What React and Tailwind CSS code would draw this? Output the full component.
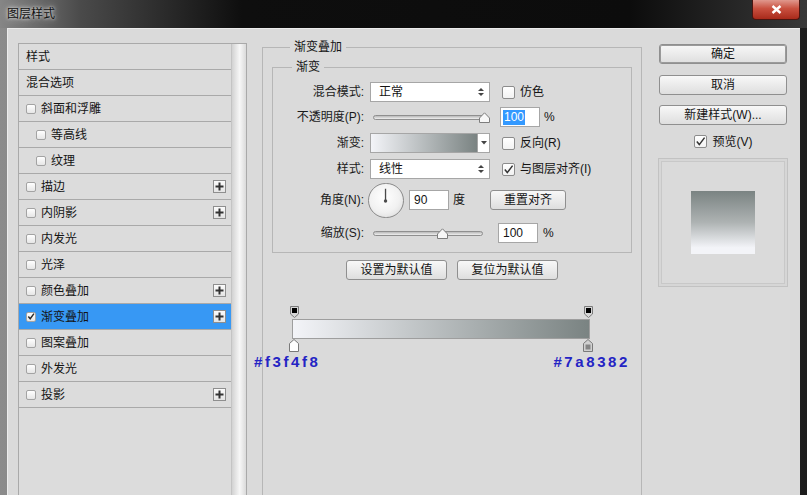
import React from "react";

const FONT = "font-['Liberation_Sans','Noto_Sans_CJK_SC',sans-serif]";

function SmallBox({ checked }) {
  return (
    <span className="w-[10px] h-[10px] shrink-0 rounded-[2px] border border-[#a3a3a3] bg-[linear-gradient(180deg,#ffffff,#e6e6e6)] flex items-center justify-center">
      {checked && (
        <svg width="9" height="9" viewBox="0 0 9 9">
          <path d="M1.5 4.5 L3.6 7 L7.8 1.2" stroke="#2a2a2a" strokeWidth="1.6" fill="none" />
        </svg>
      )}
    </span>
  );
}

function Plus() {
  return (
    <span className="ml-auto w-[13px] h-[13px] border border-[#8e8e8e] bg-[linear-gradient(180deg,#fbfbfb,#e4e4e4)] flex items-center justify-center">
      <svg width="9" height="9" viewBox="0 0 9 9">
        <rect x="3.5" y="0.5" width="2" height="8" fill="#333" />
        <rect x="0.5" y="3.5" width="8" height="2" fill="#333" />
      </svg>
    </span>
  );
}

function Check({ checked }) {
  return (
    <span className="w-[13px] h-[13px] shrink-0 rounded-[2px] border border-[#8c8c8c] bg-[linear-gradient(180deg,#ffffff,#f2f2f2)] flex items-center justify-center">
      {checked && (
        <svg width="11" height="11" viewBox="0 0 11 11">
          <path d="M1.8 5.6 L4.3 8.6 L9.6 1.6" stroke="#333" strokeWidth="1.5" fill="none" />
        </svg>
      )}
    </span>
  );
}

function Select({ value }) {
  return (
    <div className="w-[120px] h-[20px] bg-white border border-[#a6a6a6] flex items-center pl-[8px] pr-[5px]">
      <span>{value}</span>
      <svg className="ml-auto" width="6" height="10" viewBox="0 0 6 10">
        <path d="M0 4 L3 1 L6 4 Z" fill="#444" />
        <path d="M0 6 L3 9 L6 6 Z" fill="#444" />
      </svg>
    </div>
  );
}

function Thumb() {
  return (
    <svg width="11" height="11" viewBox="0 0 11 11">
      <path d="M0.5 10.5 L0.5 6 L5.5 0.8 L10.5 6 L10.5 10.5 Z" fill="#f7f7f7" stroke="#7d7d7d" />
    </svg>
  );
}

function Btn({ children, className = "" }) {
  return (
    <div
      className={`h-[20px] rounded-[3px] border border-[#8f8f8f] bg-[linear-gradient(180deg,#f8f8f8,#dedede)] flex items-center justify-center text-[#151515] ${className}`}
    >
      {children}
    </div>
  );
}

function Row({ label, children, className = "" }) {
  return (
    <div className={`flex items-center ${className}`}>
      <span className="w-[92px] text-right pr-[1px] text-[#1a1a1a]">{label}</span>
      <div className="ml-[5px] flex items-center">{children}</div>
    </div>
  );
}

const items = [
  { label: "样式" },
  { label: "混合选项" },
  { label: "斜面和浮雕", box: false },
  { label: "等高线", box: false, indent: true },
  { label: "纹理", box: false, indent: true },
  { label: "描边", box: false, plus: true },
  { label: "内阴影", box: false, plus: true },
  { label: "内发光", box: false },
  { label: "光泽", box: false },
  { label: "颜色叠加", box: false, plus: true },
  { label: "渐变叠加", box: true, plus: true, selected: true },
  { label: "图案叠加", box: false },
  { label: "外发光", box: false },
  { label: "投影", box: false, plus: true },
];

export default function App() {
  return (
    <div
      className={`w-[807px] h-[495px] overflow-hidden flex flex-col text-[12px] leading-[16px] text-[#141414] bg-[linear-gradient(90deg,#8b8b8b_0%,#5a5a5a_50%,#1c1c1c_100%)] ${FONT}`}
    >
      {/* title bar */}
      <div className="h-[28px] shrink-0 flex items-start bg-[linear-gradient(90deg,#868686_0%,#4a4a4a_10%,#0e0e0e_30%,#0c0c0c_78%,#383838_100%)]">
        <span className="mt-[6px] ml-[7px] text-[#101010] [text-shadow:0_0_6px_#dcdcdc,0_0_3px_#e6e6e6]">图层样式</span>
        <div className="ml-auto mr-[7px] w-[48px] h-[20px] rounded-b-[4px] border border-t-0 border-[#4a1510] bg-[linear-gradient(180deg,#e0988d_0%,#c9503f_45%,#a82a1b_100%)] flex items-center justify-center">
          <svg width="11" height="9" viewBox="0 0 11 9">
            <path d="M1.5 1 L9.5 8 M9.5 1 L1.5 8" stroke="#ffffff" strokeWidth="2.4" />
          </svg>
        </div>
      </div>

      {/* body */}
      <div className="flex-1 mx-[7px] bg-[#dadada] border-t border-l border-[#ececec] flex items-start pl-[10px] pt-[10px]">
        {/* left list */}
        <div className="mt-[4px] w-[229px] h-[470px] border border-[#a9a9a9] flex">
          <div className="w-[212px] flex flex-col bg-[#dcdcdc]">
            {items.map((it) => (
              <div
                key={it.label}
                className={`h-[26px] shrink-0 flex items-center border-b border-[#a9a9a9] pr-[5px] ${
                  it.indent ? "pl-[17px]" : "pl-[7px]"
                } ${it.selected ? "bg-[#3798f4]" : ""}`}
              >
                {it.box !== undefined && <SmallBox checked={it.box} />}
                <span className={it.box !== undefined ? "ml-[5px]" : ""}>{it.label}</span>
                {it.plus && <Plus />}
              </div>
            ))}
          </div>
          <div className="w-[15px] border-l border-[#c4c4c4] bg-[linear-gradient(90deg,#d2d2d2,#f7f7f7_55%,#dadada)]" />
        </div>

        {/* middle */}
        <fieldset className="ml-[15px] w-[380px] h-[470px] border border-[#b6b6b6] px-[9px]">
          <legend className="ml-[18px] px-[4px] leading-[16px]">渐变叠加</legend>

          <fieldset className="mt-[4px] border border-[#b6b6b6] pt-[7px] pb-[9px]">
            <legend className="ml-[19px] px-[4px] leading-[16px]">渐变</legend>

            <Row label="混合模式:" className="h-[20px]">
              <Select value="正常" />
              <span className="ml-[12px]"><Check /></span>
              <span className="ml-[5px]">仿色</span>
            </Row>

            <Row label="不透明度(P):" className="h-[20px] mt-[5px]">
              <div className="relative w-[120px] h-[20px] flex items-center">
                <div className="mx-[3px] flex-1 h-[5px] rounded-full border border-[#8f8f8f] bg-[linear-gradient(180deg,#b9b9b9,#efefef)]" />
                <span className="absolute top-[5px] left-[109px]"><Thumb /></span>
              </div>
              <div className="ml-[10px] w-[40px] h-[20px] bg-white border border-[#a6a6a6] flex items-center pl-[2px]">
                <span className="bg-[#3399ff] text-white px-[1px] leading-[15px]">100</span>
              </div>
              <span className="ml-[4px]">%</span>
            </Row>

            <Row label="渐变:" className="h-[20px] mt-[6px]">
              <div className="w-[120px] h-[20px] border border-[#a6a6a6] flex">
                <div className="flex-1 bg-[linear-gradient(90deg,#f3f4f8,#7a8382)]" />
                <div className="w-[12px] bg-white border-l border-[#a6a6a6] flex items-center justify-center">
                  <svg width="6" height="4" viewBox="0 0 6 4">
                    <path d="M0 0 L6 0 L3 3.5 Z" fill="#444" />
                  </svg>
                </div>
              </div>
              <span className="ml-[12px]"><Check /></span>
              <span className="ml-[5px]">反向(R)</span>
            </Row>

            <Row label="样式:" className="h-[20px] mt-[6px]">
              <Select value="线性" />
              <span className="ml-[12px]"><Check checked /></span>
              <span className="ml-[5px]">与图层对齐(I)</span>
            </Row>

            <Row label="角度(N):" className="h-[34px] mt-[4px]">
              <div className="-ml-[2px] w-[36px] h-[35px] rounded-full border border-[#8a8a8a] bg-[radial-gradient(circle_at_45%_40%,#ffffff,#f1f1f1_55%,#d4d4d4)] flex items-start justify-center">
                <svg width="36" height="35" viewBox="0 0 36 35">
                  <path d="M17.5 4 L17.5 17" stroke="#4a4a4a" strokeWidth="1.4" />
                  <circle cx="17.5" cy="17" r="1.8" fill="#4a4a4a" />
                </svg>
              </div>
              <div className="ml-[5px] w-[40px] h-[20px] bg-white border border-[#a6a6a6] flex items-center pl-[4px]">90</div>
              <span className="ml-[4px]">度</span>
              <Btn className="ml-[25px] w-[76px] h-[18px]">重置对齐</Btn>
            </Row>

            <Row label="缩放(S):" className="h-[20px] mt-[6px]">
              <div className="relative w-[116px] h-[20px] flex items-center">
                <div className="mx-[3px] flex-1 h-[5px] rounded-full border border-[#8f8f8f] bg-[linear-gradient(180deg,#b9b9b9,#efefef)]" />
                <span className="absolute top-[5px] left-[67px]"><Thumb /></span>
              </div>
              <div className="ml-[12px] w-[40px] h-[20px] bg-white border border-[#a6a6a6] flex items-center pl-[4px]">100</div>
              <span className="ml-[5px]">%</span>
            </Row>
          </fieldset>

          <div className="mt-[7px] flex justify-center gap-[10px]">
            <Btn className="w-[101px] h-[19px]">设置为默认值</Btn>
            <Btn className="w-[101px] h-[19px]">复位为默认值</Btn>
          </div>

          {/* gradient editor strip */}
          <div className="relative mt-[21px] pt-[18px] flex flex-col">
            <div className="ml-[20px] w-[298px] h-[20px] border border-[#9e9e9e] bg-[linear-gradient(90deg,#f3f4f8,#7a8382)]" />
            <svg className="absolute top-[5px] left-[18px]" width="9" height="12" viewBox="0 0 9 12">
              <path d="M0.5 0.5 L8.5 0.5 L8.5 8 L4.5 11.5 L0.5 8 Z" fill="#d6d6d6" stroke="#7a7a7a" />
              <rect x="2" y="2" width="5" height="5" fill="#000" />
            </svg>
            <svg className="absolute top-[5px] left-[312px]" width="9" height="12" viewBox="0 0 9 12">
              <path d="M0.5 0.5 L8.5 0.5 L8.5 8 L4.5 11.5 L0.5 8 Z" fill="#d6d6d6" stroke="#7a7a7a" />
              <rect x="2" y="2" width="5" height="5" fill="#000" />
            </svg>
            <svg className="absolute top-[38px] left-[17px]" width="10" height="13" viewBox="0 0 10 13">
              <path d="M0.5 12.5 L0.5 4.5 L5 0.5 L9.5 4.5 L9.5 12.5 Z" fill="#ffffff" stroke="#7a7a7a" />
            </svg>
            <svg className="absolute top-[38px] left-[311px]" width="10" height="13" viewBox="0 0 10 13">
              <path d="M0.5 12.5 L0.5 4.5 L5 0.5 L9.5 4.5 L9.5 12.5 Z" fill="#d0d0d0" stroke="#7a7a7a" />
              <rect x="2.5" y="5.5" width="5" height="5" fill="#858585" />
            </svg>
            <div className="mt-[14px] -ml-[18px] w-[376px] flex justify-between font-['Liberation_Sans',sans-serif] font-bold text-[15px] leading-[17px] tracking-[2.6px] text-[#2424c4]">
              <span>#f3f4f8</span>
              <span>#7a8382</span>
            </div>
          </div>
        </fieldset>

        {/* right */}
        <div className="ml-[17px] mt-[5px] w-[128px] flex flex-col">
          <Btn className="border-[#5f5f5f] shadow-[inset_0_0_0_1px_#9a9a9a]">确定</Btn>
          <Btn className="mt-[11px]">取消</Btn>
          <Btn className="mt-[10px]">新建样式(W)...</Btn>
          <div className="mt-[10px] h-[13px] flex items-center justify-center gap-[6px]">
            <Check checked />
            <span>预览(V)</span>
          </div>
          <div className="mt-[10px] -mx-[1px] h-[129px] border border-[#c2c2c2] shadow-[inset_0_0_0_2px_#d6d6d6,inset_0_0_0_3px_#c8c8c8] flex items-center justify-center">
            <div className="w-[64px] h-[63px] bg-[linear-gradient(180deg,#7a8382_0%,#aeb3b3_50%,#f3f4f8_90%)]" />
          </div>
        </div>
      </div>
    </div>
  );
}
